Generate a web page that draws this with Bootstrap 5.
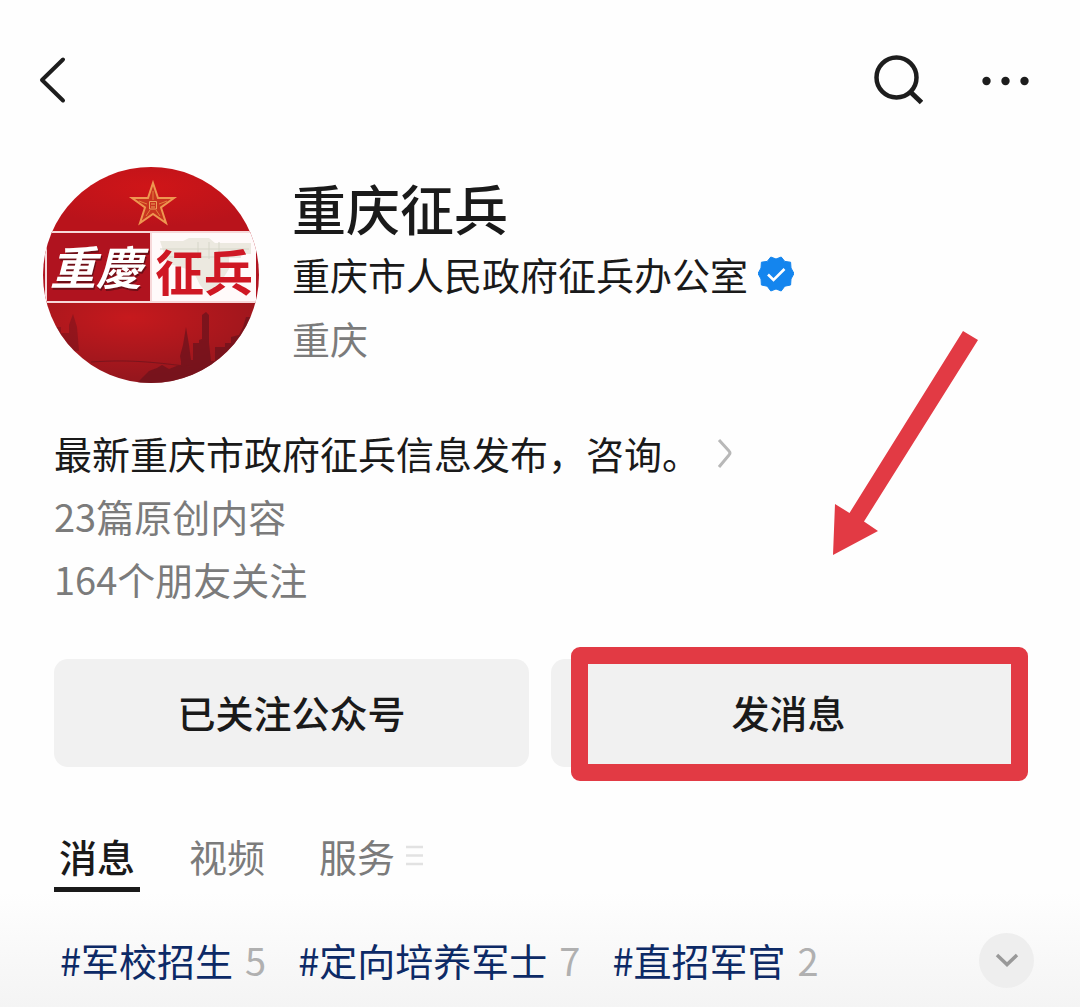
<!DOCTYPE html>
<html lang="zh-CN">
<head>
<meta charset="utf-8">
<meta name="viewport" content="width=device-width, initial-scale=1">
<title>重庆征兵</title>
<link rel="stylesheet" href="https://cdn.jsdelivr.net/npm/bootstrap@5.3.0/dist/css/bootstrap.min.css">
<style>
  body { font-family: "Noto Sans CJK SC", sans-serif; font-size: 38px; line-height: 62px; color: #1a1a1a; background: #fefefe; }
  svg { display: block; }
  .icon-btn { border: 0; padding: 0; background: none; color: #1d1d1d; }
  .top-bar { padding: 52px 50px 0 38px; }
  .top-tools { gap: 57px; }
  .profile { padding: 59px 43px 0; gap: 33px; }
  .profile-text { padding-top: 8px; }
  .profile-name { font-size: 54px; line-height: 66px; font-weight: 500; margin: 0; }
  .profile-org { line-height: 66px; gap: 10px; }
  .soft-text { color: #7b7b7b; }
  .seal-text { filter: drop-shadow(1px 2px 0 #6e0e17); }
  .about { padding: 38px 54px 0; line-height: 63px; }
  .about-link { color: inherit; gap: 17px; }
  .actions { padding: 49px 54px 0; gap: 22px; }
  .action-btn { --bs-btn-bg: #f1f1f1; --bs-btn-hover-bg: #e8e8e8; --bs-btn-color: #1a1a1a; font-size: 38px; line-height: 62px; font-weight: 500; padding: 22px 12px 24px; border: 0; border-radius: 14px; }
  .red-frame { top: 37px; right: 52px; bottom: -14px; left: calc(50% + 31px); border: 17px solid #e23a44; border-radius: 9px; pointer-events: none; }
  .red-arrow { right: 102px; bottom: 212px; pointer-events: none; }
  .tabs { padding: 58px 54px 0; gap: 44px; }
  .tab-item { color: #7b7b7b; padding: 0 5px; border-bottom: 5px solid transparent; }
  .tab-item.active { color: #1a1a1a; font-weight: 500; border-color: #1a1a1a; }
  .topics { padding: 37px 46px 16px 60px; background: linear-gradient(#fefefe, #f4f4f4); gap: 32px; }
  .topic { color: #0d2a66; gap: 12px; }
  .topic-count { color: #b0b0b0; }
  .more-btn { width: 55px; height: 55px; background: #eeeeee; color: #999; }
</style>
<script src="https://cdn.jsdelivr.net/npm/bootstrap@5.3.0/dist/js/bootstrap.bundle.min.js"></script>
</head>
<body>
<header class="top-bar d-flex align-items-center justify-content-between">
  <button class="icon-btn" type="button" aria-label="返回">
    <svg width="30" height="56" viewBox="0 0 30 56" fill="none" stroke="currentColor" stroke-width="4" stroke-linecap="round" stroke-linejoin="round"><path d="M25 7.500L4 28L25 48.500"/></svg>
  </button>
  <div class="top-tools d-flex align-items-center">
    <button class="icon-btn" type="button" aria-label="搜索">
      <svg width="60" height="56" viewBox="0 0 60 56" fill="none" stroke="currentColor" stroke-width="4.500"><circle cx="33.500" cy="25.500" r="20"/><path d="M47.500 40L58.500 50.500" stroke-width="5"/></svg>
    </button>
    <button class="icon-btn" type="button" aria-label="更多">
      <svg width="50" height="56" viewBox="0 0 50 56" fill="currentColor"><circle cx="6.500" cy="29" r="4.200"/><circle cx="25.500" cy="29" r="4.200"/><circle cx="44.500" cy="29" r="4.200"/></svg>
    </button>
  </div>
</header>

<main>
  <section class="profile d-flex">
    <svg class="flex-shrink-0" width="216" height="216" viewBox="0 0 216 216" role="img" aria-label="重慶征兵">
      <defs>
        <clipPath id="disc"><circle cx="108" cy="108" r="108"/></clipPath>
        <radialGradient id="redTop" cx=".5" cy=".3" r=".6"><stop offset="0" stop-color="#cf1518"/><stop offset="1" stop-color="#b9131b"/></radialGradient>
        <radialGradient id="redLow" cx=".4" cy=".2" r=".75"><stop offset="0" stop-color="#c6191d"/><stop offset="1" stop-color="#96161d"/></radialGradient>
      </defs>
      <g clip-path="url(#disc)">
        <rect width="216" height="66" fill="url(#redTop)"/>
        <rect y="134" width="216" height="82" fill="url(#redLow)"/>
        <rect y="65" width="216" height="70" fill="#b0131f"/>
        <g fill="#6c131c" opacity=".75">
          <path d="M138 216V194L137 189L140 178L143 160L146 178L148 193H150V176H156V173L159 172V148L163 145L166 148V176L168 194H172V180H182V176H188V170L196 168L200 160L203 150H216V216Z"/>
          <path d="M12 178V160H18V166H26V158L30 147L34 160L36 184H24Z" opacity=".6"/>
          <path d="M94 216L100 210L106 204L114 201L119 198L126 202L136 198H144V216Z"/>
        </g>
        <path d="M48 195C90 192 116 196 150 200" stroke="#7a151d" fill="none"/>
        <rect x="109" y="65" width="104" height="70" fill="#fffafa"/>
        <path d="M117 74H140L146 71H166L172 76H208V87H186V102L176 118L166 128L157 118L150 104L124 96Z" fill="#ece9e0"/>
        <path d="M117 82H206M126 90H198M155 75V92M166 75V92M176 75V92" stroke="#d6d6c9" stroke-width="1" fill="none"/>
        <path d="M0 65H216M0 135H216M3 65V135M108 65V135" stroke="#f7d9da" stroke-width="2"/>
        <path d="M110 16L115 31H131L118 40.500L123 56L110 47L97 56L102 40.500L89 31H105Z" fill="#c9341f" stroke="#ee9650" stroke-width="2"/>
        <path d="M110 24V33M96 34L104 37M124 34L116 37M103 49L107 43M117 49L113 43" stroke="#e5823e" stroke-width="1"/>
        <path d="M106.500 42V34.500H113.500V42ZM108 37H112M108 40H112" stroke="#eca05b" stroke-width="1" fill="none"/>
        <g font-family="'Noto Sans CJK TC','Noto Sans CJK SC',sans-serif" font-weight="700">
          <text class="seal-text" x="7" y="118" fill="#fff" font-size="46" font-style="italic">重慶</text>
          <text x="112" y="124" fill="#cf1824" font-size="49">征兵</text>
        </g>
      </g>
    </svg>
    <div class="profile-text">
      <h1 class="profile-name">重庆征兵</h1>
      <div class="profile-org d-flex align-items-center">
        <span>重庆市人民政府征兵办公室</span>
        <svg width="36" height="36" viewBox="0 0 36 36" role="img" aria-label="已认证"><path d="M12.800 1L18 3L23.200 1L26.800 5.400L32.600 6.200L33 12L36 17.500L33 23L32.600 29L26.800 30.200L23.200 35L18 33L12.800 35L9.200 30.200L3.400 29L3 23L0 17.500L3 12L3.400 6.200L9.200 5.400Z" fill="#1485ee" stroke="#1485ee" stroke-linejoin="round"/><path d="M10 18.500L15.500 24L26.500 13" fill="none" stroke="#fff" stroke-width="2.600"/></svg>
      </div>
      <div class="soft-text">重庆</div>
    </div>
  </section>

  <section class="about">
    <a class="about-link d-flex align-items-center text-decoration-none" href="#about">
      <span>最新重庆市政府征兵信息发布，咨询。</span>
      <svg width="16" height="32" viewBox="0 0 16 32" fill="none" stroke="#b8b8b8" stroke-width="3"><path d="M2 3L12 14Q14 16 12 18L2 30"/></svg>
    </a>
    <div class="soft-text">23篇原创内容</div>
    <div class="soft-text">164个朋友关注</div>
  </section>

  <section class="actions d-flex position-relative">
    <button class="btn action-btn flex-fill w-50" type="button">已关注公众号</button>
    <button class="btn action-btn flex-fill w-50" type="button">发消息</button>
    <div class="red-frame position-absolute"></div>
    <svg class="red-arrow position-absolute" width="145" height="224" viewBox="0 0 145 224" fill="#e23a44" aria-hidden="true"><path d="M0 224L2 173L16.500 182L130 0L145 9L31 190.500L45 200Z"/></svg>
  </section>

  <nav class="tabs nav align-items-start">
    <a class="tab-item active text-decoration-none" href="#news" aria-current="page">消息</a>
    <a class="tab-item text-decoration-none" href="#video">视频</a>
    <a class="tab-item text-decoration-none d-flex align-items-center" href="#service">服务
      <svg class="ms-2" width="22" height="24" viewBox="0 0 22 24" stroke="#e2e2e2" stroke-width="2.500"><path d="M3 3H20M3 11.500H20M3 20H20"/></svg>
    </a>
  </nav>

  <section class="topics d-flex align-items-center">
    <a class="topic d-flex text-decoration-none" href="#t1">#军校招生 <span class="topic-count">5</span></a>
    <a class="topic d-flex text-decoration-none" href="#t2">#定向培养军士 <span class="topic-count">7</span></a>
    <a class="topic d-flex text-decoration-none" href="#t3">#直招军官 <span class="topic-count">2</span></a>
    <button class="icon-btn more-btn rounded-circle d-flex align-items-center justify-content-center ms-auto" type="button" aria-label="展开">
      <svg width="24" height="16" viewBox="0 0 24 16" fill="none" stroke="currentColor" stroke-width="3.500"><path d="M2 3L12 12.500L22 3"/></svg>
    </button>
  </section>
</main>
</body>
</html>
